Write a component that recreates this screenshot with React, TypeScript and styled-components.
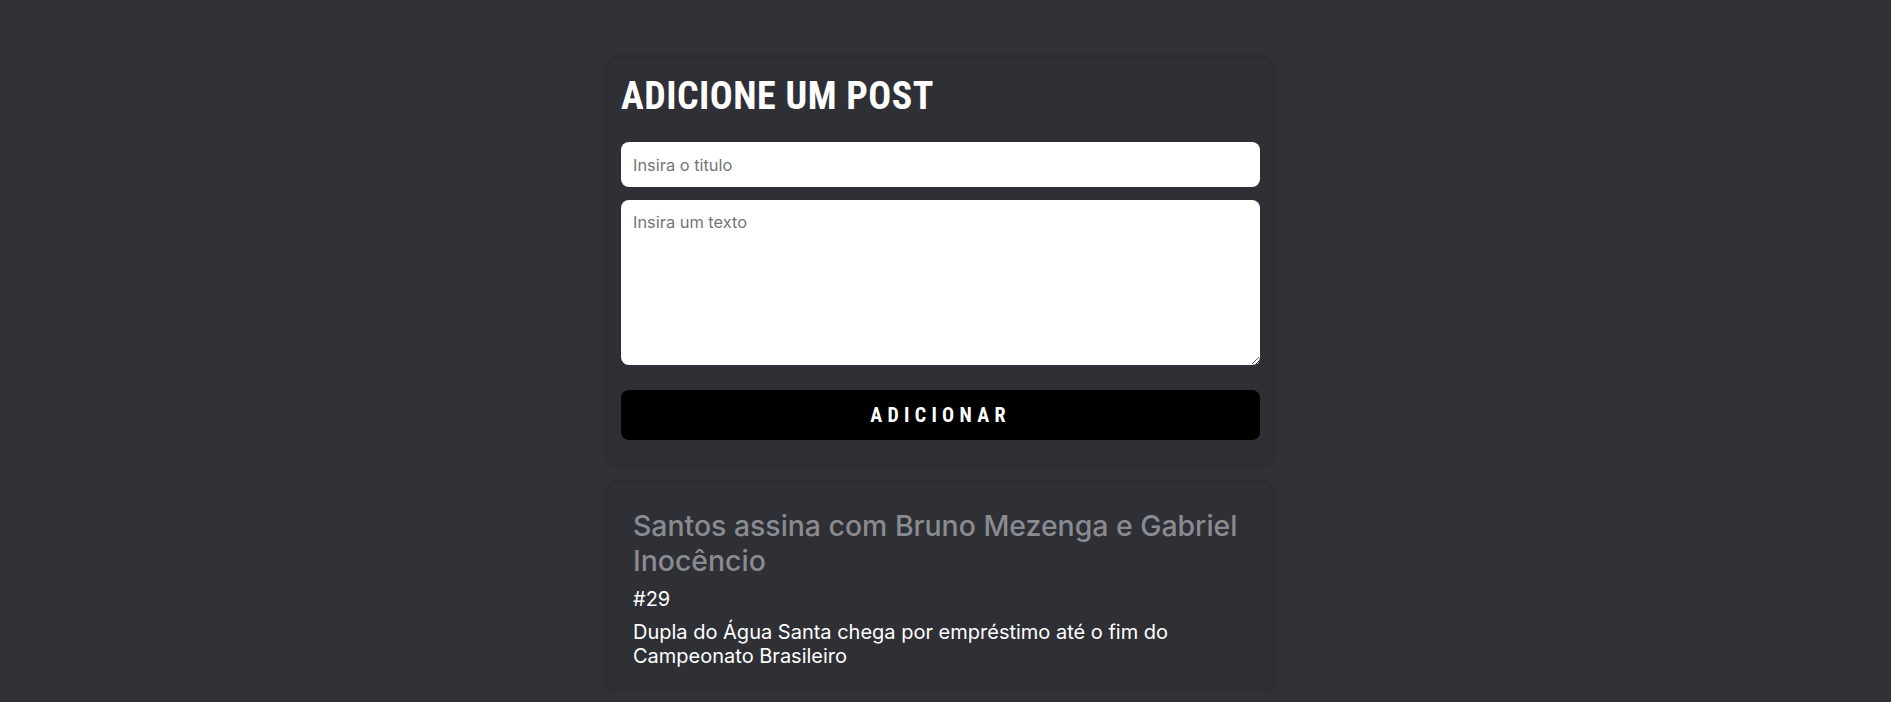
import React from "react";
import styled, { createGlobalStyle } from "styled-components";

const GlobalStyle = createGlobalStyle`
  html, body {
    margin: 0;
    padding: 0;
    background: #313238;
  }
  * { box-sizing: border-box; }
`;

const Page = styled.main`
  display: flex;
  flex-direction: column;
  align-items: center;
  padding: 59px 11px 0 0;
  font-family: "Inter", "Noto Sans", sans-serif;
`;

const Card = styled.section<{ $pad: string; $gap?: number }>`
  width: 664px;
  background: #2f3036;
  border-radius: 12px;
  box-shadow: 0 0 8px rgba(0, 0, 0, 0.28);
  padding: ${(p) => p.$pad};
  margin-top: ${(p) => p.$gap ?? 0}px;
`;

const Form = styled.form`
  display: flex;
  flex-direction: column;
`;

const Heading = styled.h1`
  margin: 0 0 24px;
  font-family: "Roboto Condensed", "DejaVu Sans Condensed", "Roboto", sans-serif;
  font-weight: 700;
  font-size: 38px;
  line-height: 44px;
  letter-spacing: 0.5px;
  color: #ffffff;
`;

const fieldBase = `
  width: 100%;
  border: none;
  border-radius: 8px;
  background: #ffffff;
  font-family: "Inter", "Noto Sans", sans-serif;
  font-size: 16.4px;
  color: #222;
  outline: none;
  &::placeholder { color: #757575; }
`;

const TitleInput = styled.input`
  ${fieldBase}
  height: 45px;
  padding: 0 12px;
`;

const TextArea = styled.textarea`
  ${fieldBase}
  display: block;
  height: 165px;
  margin-top: 13px;
  padding: 12px;
  resize: vertical;
  line-height: normal;
`;

const SubmitButton = styled.button`
  margin-top: 25px;
  height: 50px;
  width: 100%;
  border: none;
  border-radius: 8px;
  background: #000000;
  color: #ffffff;
  font-family: "Roboto Condensed", "DejaVu Sans Condensed", "Roboto", sans-serif;
  font-weight: 700;
  font-size: 20px;
  letter-spacing: 5.3px;
  text-transform: uppercase;
  cursor: pointer;
  padding: 0;
`;

const PostTitle = styled.h2`
  margin: 0 0 9px;
  font-size: 28.4px;
  font-weight: 500;
  line-height: normal;
  color: #8a8b91;
`;

const PostText = styled.p<{ $last?: boolean }>`
  margin: 0 0 ${(p) => (p.$last ? 0 : 9)}px;
  font-size: 20px;
  line-height: normal;
  color: #ffffff;
`;

export default function App() {
  return (
    <>
      <GlobalStyle />
      <Page>
        <Card $pad="15px 12px 24px 13px">
          <Form onSubmit={(e) => e.preventDefault()}>
            <Heading>ADICIONE UM POST</Heading>
            <TitleInput placeholder="Insira o titulo" />
            <TextArea placeholder="Insira um texto" />
            <SubmitButton type="submit">Adicionar</SubmitButton>
          </Form>
        </Card>
        <Card $pad="25px" $gap={19}>
          <PostTitle>Santos assina com Bruno Mezenga e Gabriel Inocêncio</PostTitle>
          <PostText>#29</PostText>
          <PostText $last>
            Dupla do Água Santa chega por empréstimo até o fim do Campeonato Brasileiro
          </PostText>
        </Card>
      </Page>
    </>
  );
}
